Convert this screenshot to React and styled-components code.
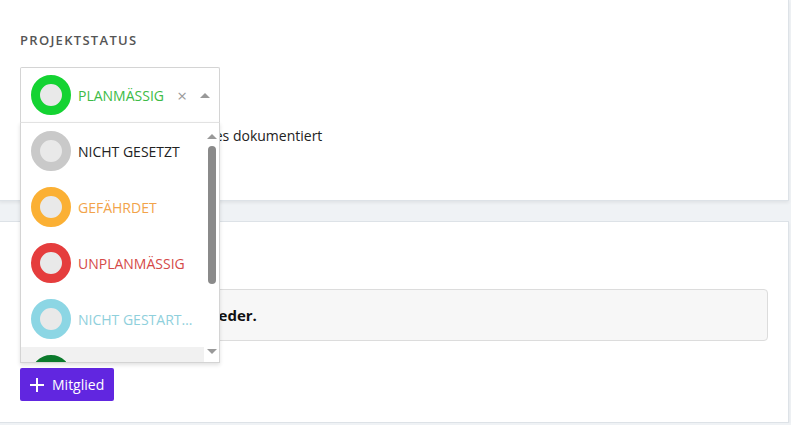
import React from "react";
import styled, { createGlobalStyle } from "styled-components";

const GlobalStyle = createGlobalStyle`
  html, body {
    margin: 0;
    padding: 0;
    background: #eff2f5;
    font-family: "Open Sans", "Liberation Sans", sans-serif;
    color: #222;
  }
`;

const Page = styled.div`
  width: 790px;
  display: flex;
  flex-direction: column;
  gap: 20px;
  margin-left: -1px;
`;

const Card = styled.section`
  background: #fff;
  border: 1px solid #dde2e7;
  border-top: ${(p) => (p.first ? "none" : "1px solid #dde2e7")};
  box-shadow: 0 2px 3px rgba(0, 0, 0, 0.06);
  padding: 32px 20px 19px 20px;
  height: ${(p) => p.h}px;
  box-sizing: border-box;
  position: relative;
  z-index: ${(p) => (p.first ? 2 : 1)};
`;

const Label = styled.h3`
  margin: 0 0 19px;
  font-size: 13px;
  font-weight: 600;
  letter-spacing: 1.3px;
  color: #555;
  line-height: 16px;
`;

const SelectWrap = styled.div`
  position: relative;
  width: 200px;
`;

const Control = styled.div`
  height: 56px;
  box-sizing: border-box;
  border: 1px solid #d4d4d4;
  border-bottom-color: #e2e2e2;
  border-radius: 2px 2px 0 0;
  display: flex;
  align-items: center;
  padding: 0 9px 0 10px;
  background: #fff;
`;

const Ring = styled.span`
  flex: none;
  width: 40px;
  height: 40px;
  box-sizing: border-box;
  border-radius: 50%;
  border: 9px solid ${(p) => p.color};
  background: #e9e9e9;
`;

const ValueText = styled.span`
  flex: 1;
  margin-left: 7px;
  font-size: 14px;
  font-weight: 500;
  color: ${(p) => p.color};
  white-space: nowrap;
  overflow: hidden;
  text-overflow: ellipsis;
`;

const Clear = styled.span`
  color: #9a9a9a;
  font-size: 17px;
  line-height: 1;
  margin-right: 13px;
  margin-top: 1px;
`;

const Caret = styled.span`
  width: 0;
  height: 0;
  border-left: 5px solid transparent;
  border-right: 5px solid transparent;
  border-bottom: ${(p) => (p.down ? "none" : "5px solid #999")};
  border-top: ${(p) => (p.down ? "5px solid #999" : "none")};
`;

const Menu = styled.div`
  position: absolute;
  top: 55px;
  left: 0;
  width: 200px;
  height: 241px;
  box-sizing: border-box;
  border: 1px solid #d4d4d4;
  border-top: 1px solid #e2e2e2;
  background: #fff;
  box-shadow: 0 2px 4px rgba(0, 0, 0, 0.12);
  display: flex;
  overflow: hidden;
`;

const Options = styled.div`
  flex: 1;
  min-width: 0;
  overflow: hidden;
`;

const Option = styled.div`
  height: 56px;
  display: flex;
  align-items: center;
  padding: 0 10px 0 10px;
  background: ${(p) => (p.active ? "#f1f1f1" : "#fff")};
`;

const ScrollTrack = styled.div`
  flex: none;
  width: 15px;
  display: flex;
  flex-direction: column;
  align-items: center;
  padding: 11px 0 8px;
  box-sizing: border-box;
`;

const Thumb = styled.div`
  width: 8px;
  height: 138px;
  margin-top: 7px;
  border-radius: 4px;
  background: #8a8a8a;
`;

const Spacer = styled.div`
  flex: 1;
`;

const BodyText = styled.p`
  margin: 3px 0 0;
  font-size: 14px;
  line-height: 20px;
  color: #222;
`;

const EmptyBox = styled.div`
  margin-top: 17px;
  height: 52px;
  box-sizing: border-box;
  background: #f7f7f7;
  border: 1px solid #dcdcdc;
  border-radius: 4px;
  display: flex;
  align-items: center;
  padding: 0 16px;
  font-size: 15px;
  font-weight: 700;
  color: #111;
`;

const AddButton = styled.button`
  margin-top: 27px;
  height: 33px;
  padding: 0 10px 0 9px;
  display: inline-flex;
  align-items: center;
  gap: 7px;
  background: #6126e0;
  color: #fff;
  border: none;
  border-radius: 2px;
  font-family: "Open Sans", "Liberation Sans", sans-serif;
  font-size: 14px;
  font-weight: 500;
  cursor: pointer;
`;

const options = [
  { label: "NICHT GESETZT", ring: "#c9c9c9", text: "#222" },
  { label: "GEFÄHRDET", ring: "#fbb034", text: "#f2a34a" },
  { label: "UNPLANMÄSSIG", ring: "#e53d3d", text: "#d54a48" },
  { label: "NICHT GESTARTET", ring: "#8cd6e4", text: "#8fd0dc" },
  { label: "ABGESCHLOSSEN", ring: "#0b7a2c", text: "#0b7a2c", active: true },
];

export default function App() {
  return (
    <>
      <GlobalStyle />
      <Page>
        <Card first h={201}>
          <Label>PROJEKTSTATUS</Label>
          <SelectWrap>
            <Control>
              <Ring color="#14d332" />
              <ValueText color="#3cbb46">PLANMÄSSIG</ValueText>
              <Clear>×</Clear>
              <Caret />
            </Control>
            <Menu>
              <Options>
                {options.map((o) => (
                  <Option key={o.label} active={o.active}>
                    <Ring color={o.ring} />
                    <ValueText color={o.text}>{o.label}</ValueText>
                  </Option>
                ))}
              </Options>
              <ScrollTrack>
                <Caret />
                <Thumb />
                <Spacer />
                <Caret down />
              </ScrollTrack>
            </Menu>
          </SelectWrap>
          <BodyText>Kein Statusverlauf des Projektes dokumentiert</BodyText>
        </Card>
        <Card h={202}>
          <Label>PROJEKTMITGLIEDER</Label>
          <EmptyBox>Es gibt noch keine Mitglieder.</EmptyBox>
          <AddButton>
            <svg width="16" height="16" viewBox="0 0 16 16">
              <path d="M8 1v14M1 8h14" stroke="#fff" strokeWidth="2" />
            </svg>
            Mitglied
          </AddButton>
        </Card>
      </Page>
    </>
  );
}
